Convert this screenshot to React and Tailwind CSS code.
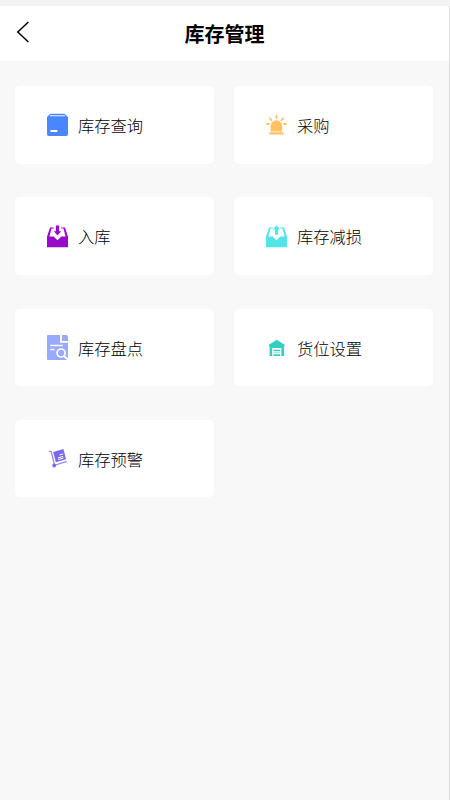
import React from "react";

const iconClass = "block w-[21px] h-[25px] shrink-0";

const QueryIcon = () => (
  <svg className={iconClass} viewBox="0 0 21 25">
    <path fill="#4a86ff" d="M3.5 1.8h14L21 5V22a2 2 0 0 1-2 2H2a2 2 0 0 1-2-2V5z" />
    <path stroke="#d9e6ff" strokeWidth="1.2" d="M3 3.7h15" />
    <path stroke="#fff" strokeWidth="2" strokeLinecap="round" d="M4.2 18.9h5.4" />
  </svg>
);

const PurchaseIcon = () => (
  <svg className={iconClass} viewBox="0 0 21 25">
    <path fill="#ffc163" d="M4.7 19.4V14a5.7 5.7 0 0 1 11.4 0v5.4z" />
    <g stroke="#ffc163" strokeWidth="1.7" strokeLinecap="round">
      <path d="M10.5 3.7v2.6M3.8 6.4l1.8 2M17.2 6.4l-1.8 2M1 11.9h2.2M20 11.9h-2.2" />
      <path strokeWidth="2.1" d="M4.2 21.4h12.6" />
    </g>
  </svg>
);

const TrayIcon = ({ color, up }) => (
  <svg className={iconClass} viewBox="0 0 21 25">
    <path
      fill={color}
      d="M3 3.4h3.8v1.2H4.5L2.4 12.6h3.9c.7 0 1 .5 1.3 1l2.9 2.6 2.9-2.6c.3-.5.6-1 1.3-1h3.9L16.5 4.6h-2.3V3.4H18l3 9.4v10.5H0V12.8z"
    />
    {up ? (
      <path fill={color} d="M10.5 1.2l3.6 4.3h-2v5.3H8.9V5.5h-2z" />
    ) : (
      <path fill={color} d="M8.9 1.4h3.2v5.8h2.1l-3.7 4.4-3.7-4.4h2.1z" />
    )}
  </svg>
);

const CheckIcon = () => (
  <svg className={iconClass} viewBox="0 0 21 25">
    <path fill="#98aaff" d="M1 0h12v7.8h8V24a1 1 0 0 1-1 1H1a1 1 0 0 1-1-1V1a1 1 0 0 1 1-1z" />
    <path fill="#98aaff" d="M15 0h4.8L21 1.2V6h-6z" />
    <g fill="none" stroke="#fff" strokeWidth="1.5">
      <path d="M3.2 10.6h12.6M3.2 14.5h4.3" />
      <circle cx="14.1" cy="18" r="4" strokeWidth="1.7" />
      <path strokeWidth="2" d="M17 20.9l4 3.6" />
    </g>
  </svg>
);

const LocationIcon = () => (
  <svg className={iconClass} viewBox="0 0 21 25">
    <path fill="#34cfc1" d="M10.8 4.8l8.2 5.2-.9 1.7V21H3.6v-9.3L2.6 10z" />
    <path fill="#fff" d="M6.2 13h9.2v8H6.2z" />
    <path stroke="#34cfc1" strokeWidth="1.7" d="M7.4 15.5h6.8M7.4 20.1h6.8" />
    <path stroke="#34cfc1" strokeWidth=".6" d="M7.6 17.8h6.4" />
  </svg>
);

const WarningIcon = () => (
  <svg className={iconClass} viewBox="0 0 21 25">
    <path fill="#7869ee" d="M6.2 5.9l10.2-3 2.6 10.4-10.2 3z" />
    <path fill="none" stroke="#8e82f2" strokeWidth="1.2" strokeLinecap="round" strokeLinejoin="round" d="M2.3 5.3l2 .3 3.2 13.6 11.7-3.6" />
    <circle cx="7.2" cy="19.5" r="1.9" fill="#7869ee" />
    <path stroke="#fff" strokeWidth="1" d="M12.6 8.9l3.6-1.1M10.8 12l5.4-1.6M11.2 13.6l5.3-1.6" />
  </svg>
);

const menus = [
  { name: "库存查询", icon: <QueryIcon /> },
  { name: "采购", icon: <PurchaseIcon /> },
  { name: "入库", icon: <TrayIcon color="#9709cb" /> },
  { name: "库存减损", icon: <TrayIcon color="#50e5e6" up /> },
  { name: "库存盘点", icon: <CheckIcon /> },
  { name: "货位设置", icon: <LocationIcon /> },
  { name: "库存预警", icon: <WarningIcon /> },
];

const App = () => {
  return (
    <div className="h-screen flex flex-col overflow-hidden bg-[#f3f3f3] pt-1.5 font-['Liberation_Sans','Noto_Sans_CJK_SC',sans-serif]">
      <div className="flex-1 flex flex-col bg-[#f8f8f8] border-r border-[#dedede]">
        {/* Header */}
        <header className="h-[55px] shrink-0 grid grid-cols-[48px_1fr_48px] items-center bg-white">
          <button className="pl-4 pb-[3.5px]" aria-label="返回">
            <svg className="block w-[14px] h-[22px]" viewBox="0 0 14 22" fill="none" stroke="#000" strokeWidth="1.5">
              <path d="M12.4 1L1.8 11l10.6 10" />
            </svg>
          </button>
          <h1 className="pt-[3px] text-center text-xl leading-none font-bold text-black">库存管理</h1>
        </header>

        {/* Menu */}
        <main className="grid grid-cols-2 auto-rows-[77.5px] gap-x-5 gap-y-[33.75px] pt-[25.1px] pl-[15px] pr-4">
          {menus.map((item) => (
            <div key={item.name} className="flex items-center gap-2.5 pl-8 bg-white rounded-[5px]">
              {item.icon}
              <span className="pt-[3px] text-[16.3px] leading-none font-light text-black">{item.name}</span>
            </div>
          ))}
        </main>
      </div>
    </div>
  );
};

export default App;
